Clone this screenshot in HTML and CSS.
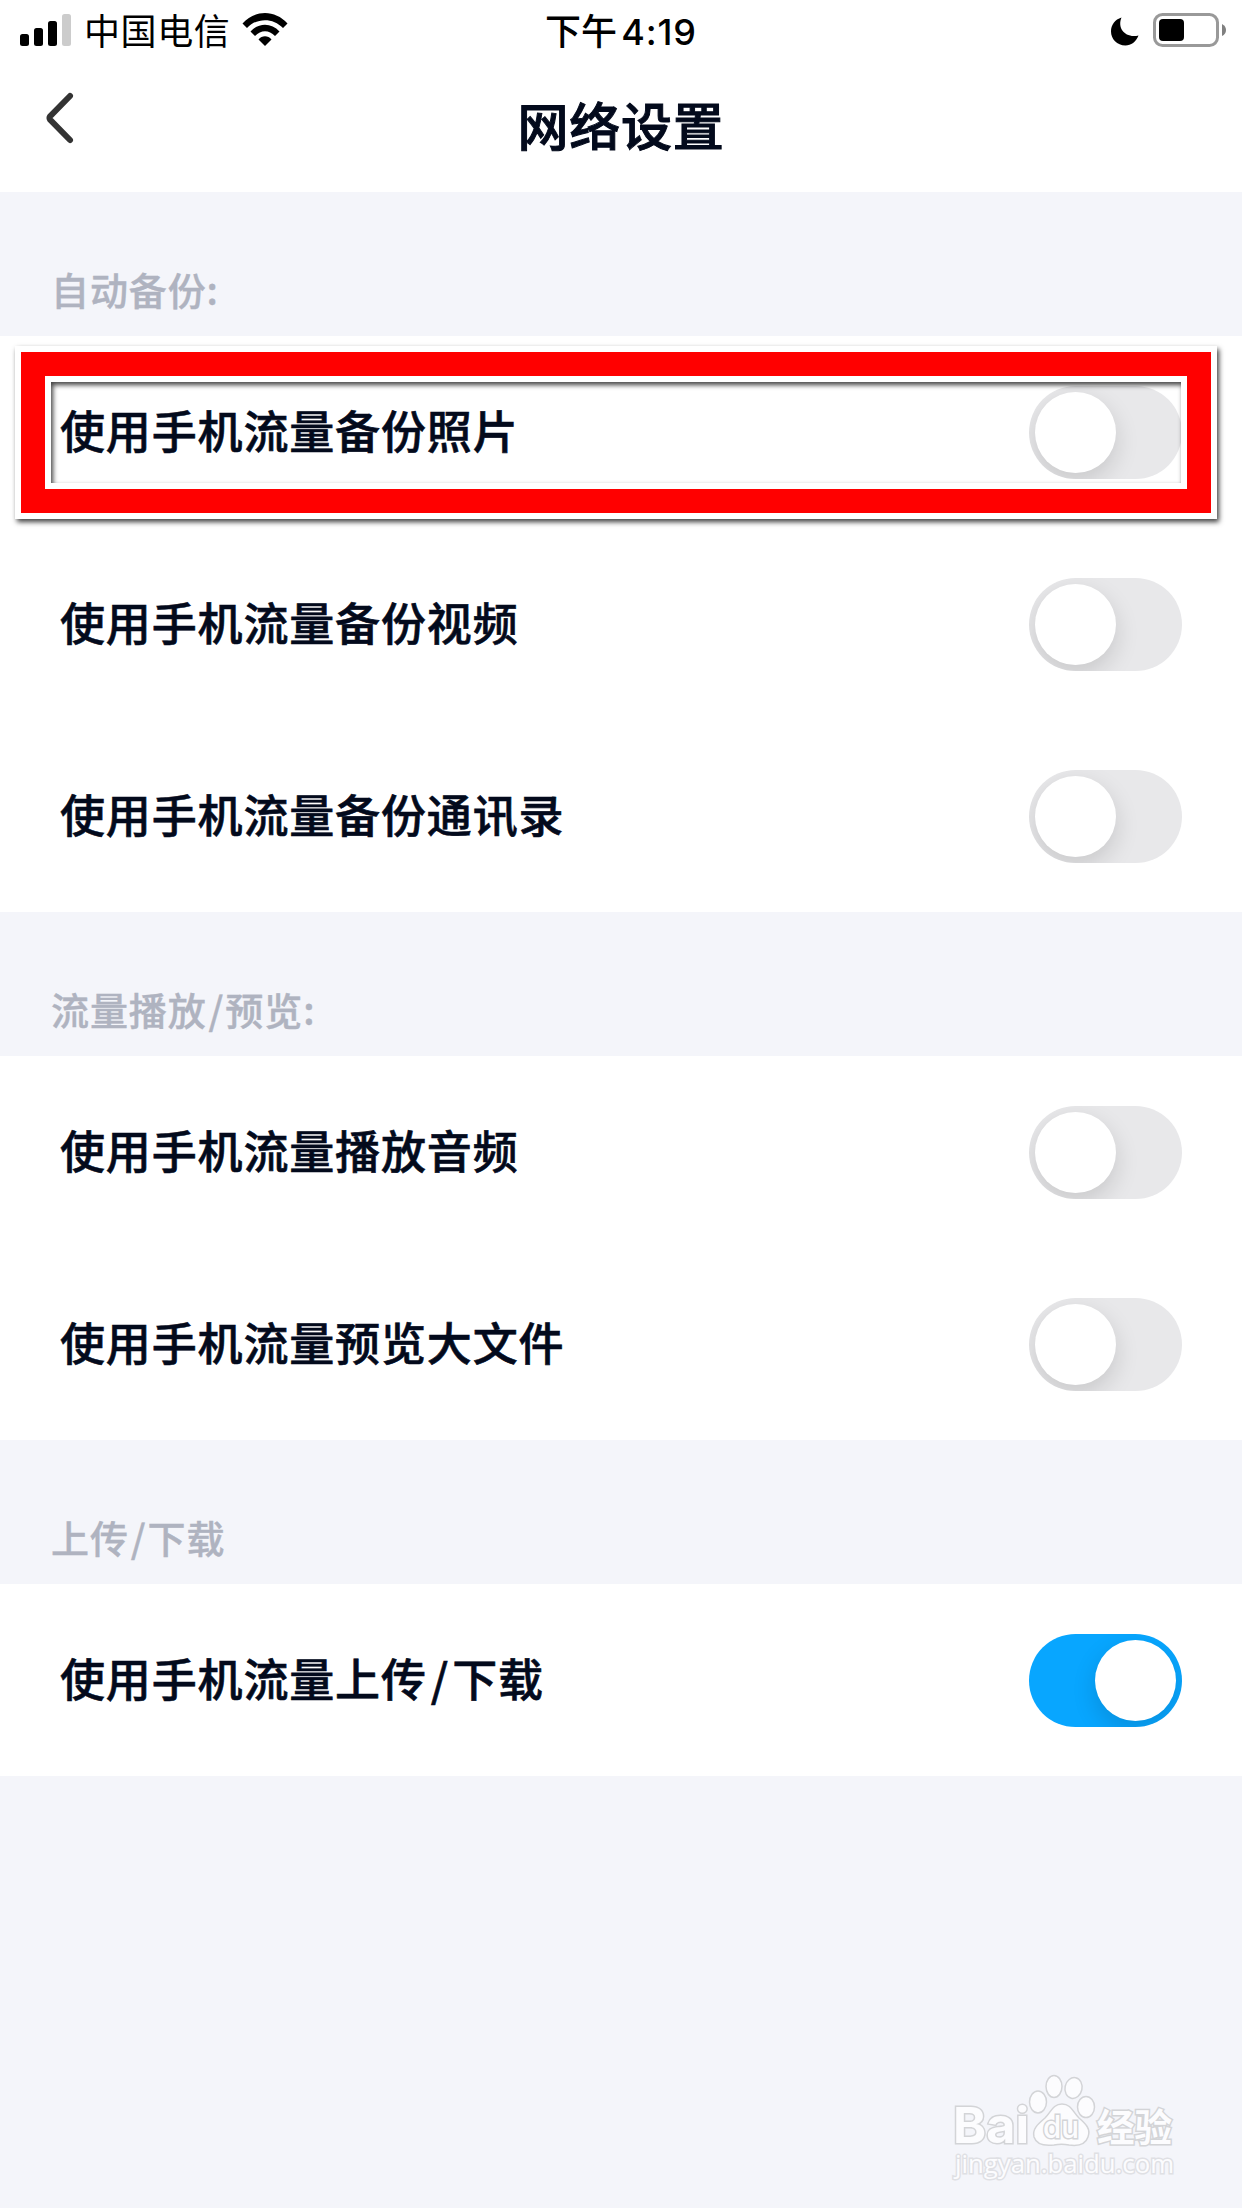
FILE: index.html
```html
<!DOCTYPE html>
<html lang="zh-CN">
  <head>
    <meta charset="UTF-8" />
    <meta name="viewport" content="width=device-width, initial-scale=1.0" />
    <title>网络设置</title>
    <link rel="stylesheet" href="styles.css">
  </head>
  <body>
    <div class="status-bar">
      <div class="status-left">
        <svg class="signal" width="52" height="32" viewBox="0 0 52 32">
          <rect x="0" y="20" width="9" height="12" rx="2.5" />
          <rect x="14" y="14" width="9" height="18" rx="2.5" />
          <rect x="28" y="7" width="9" height="25" rx="2.5" />
          <rect x="42" y="0" width="9" height="32" rx="2.5" fill="#ccc" />
        </svg>
        <span class="carrier">中国电信</span>
        <svg class="wifi" width="46" height="34" viewBox="0 0 46 34">
          <path d="M0.5 10.5C13-3.5 33-3.5 45.5 10.5L41 15C31 4.500 15 4.500 5 15Z" />
          <path d="M8.500 18.500C16.500 9.500 29.500 9.500 37.500 18.500L33 23C27 16.500 19 16.500 13 23Z" />
          <path d="M16.500 26.500C20 22.300 26 22.300 29.500 26.500L23 33Z" />
        </svg>
      </div>
      <div class="time">下午 <span>4:19</span></div>
      <div class="status-right">
        <svg class="moon" width="28" height="29" viewBox="0 0 28 29">
          <path d="M10.500 0.500C6 11 14 21.500 27.500 18.500C25 25 20 28.500 14.500 28.500C6 28.500 0 22 0 14.500C0 8 4 2.500 10.500 0.500Z" />
        </svg>
        <svg class="battery" width="74" height="35" viewBox="0 0 74 35">
          <rect x="1.500" y="1.500" width="63" height="31" rx="8" fill="none" stroke="#999" stroke-width="3" />
          <rect x="6" y="6" width="25" height="22" rx="4" />
          <path d="M69 11Q73 13 73 17T69 23Z" fill="#808080" />
        </svg>
      </div>
    </div>

    <div class="header">
      <svg class="back" width="30" height="54" viewBox="0 0 30 54">
        <path d="M25 5L5 25.500Q4 27 5 28.500L25 49" />
      </svg>
      <h1>网络设置</h1>
    </div>

    <div class="section-title">自动备份:</div>
    <div class="section">
      <div class="row">
        <p>使用手机流量备份照片</p>
        <div class="switch"></div>
        <div class="highlight"></div>
      </div>
      <div class="row">
        <p>使用手机流量备份视频</p>
        <div class="switch"></div>
      </div>
      <div class="row">
        <p>使用手机流量备份通讯录</p>
        <div class="switch"></div>
      </div>
    </div>

    <div class="section-title">流量播放<span class="slash">/</span>预览:</div>
    <div class="section">
      <div class="row">
        <p>使用手机流量播放音频</p>
        <div class="switch"></div>
      </div>
      <div class="row">
        <p>使用手机流量预览大文件</p>
        <div class="switch"></div>
      </div>
    </div>

    <div class="section-title">上传<span class="slash">/</span>下载</div>
    <div class="section">
      <div class="row">
        <p>使用手机流量上传<span class="slash">/</span>下载</p>
        <div class="switch on"></div>
      </div>
    </div>

    <svg class="watermark" width="240" height="120" viewBox="0 0 240 120">
      <g class="mark">
        <text class="logo" x="3" y="73" font-size="50" textLength="76" lengthAdjust="spacingAndGlyphs">Bai</text>
        <ellipse cx="88" cy="32" rx="8.500" ry="11" />
        <ellipse cx="104" cy="16.500" rx="8" ry="11" />
        <ellipse cx="123.500" cy="18" rx="8.500" ry="10.500" transform="rotate(12 123.500 18)" />
        <ellipse cx="136" cy="37" rx="8.500" ry="10.500" />
        <path d="M112 34C121 34 123 42 129 48C136 54 141 59 138 67C135 76 126 76 119 75C114 74 109 74 104 75C96 76 87 76 84 67C82 59 88 54 95 48C101 42 103 34 112 34Z" />
        <text class="du" x="93" y="68" font-size="31" textLength="36" lengthAdjust="spacingAndGlyphs">du</text>
        <text class="jingyan" x="147" y="71" font-size="38" textLength="75" lengthAdjust="spacingAndGlyphs">经验</text>
        <text class="url" x="5" y="103" font-size="26" textLength="219" lengthAdjust="spacingAndGlyphs">jingyan.baidu.com</text>
      </g>
    </svg>
  </body>
</html>
```
FILE: styles.css
```css
*,
*::before,
*::after {
  box-sizing: border-box;
}

body {
  position: relative;
  margin: 0;
  height: 2208px;
  overflow: hidden;
  background-color: #f4f5fa;
  color: #030a1c;
  font-family: "Noto Sans CJK SC", sans-serif;
}

svg {
  display: block;
}

/* status bar */
.status-bar {
  display: grid;
  grid-template-columns: 1fr auto 1fr;
  height: 60px;
  background-color: #fff;
  color: #000;
  font-size: 36px;
  line-height: 58px;
}

.status-left,
.status-right {
  display: flex;
  align-items: flex-start;
}

.status-left {
  padding-left: 20px;
}

.signal {
  margin-top: 14px;
}

.carrier {
  margin-left: 12px;
  letter-spacing: 0.6px;
}

.wifi {
  margin: 13px 0 0 12px;
}

.time {
  font-weight: 500;
  white-space: nowrap;
}

.time span {
  margin-left: -4px;
  font-family: Inter, sans-serif;
  letter-spacing: 0.9px;
}

.status-right {
  justify-content: flex-end;
  padding-right: 15px;
}

.moon {
  margin: 17px 14px 0 0;
}

.battery {
  margin-top: 13px;
}

/* title */
.header {
  display: grid;
  grid-template-columns: 1fr auto 1fr;
  height: 132px;
  background-color: #fff;
}

.back {
  margin: 31px 0 0 45px;
  fill: none;
  stroke: #333;
  stroke-width: 6;
  stroke-linecap: round;
}

h1 {
  margin: 26px 0 0;
  font-size: 51px;
  font-weight: 500;
  line-height: 76px;
  letter-spacing: 0.7px;
  -webkit-text-stroke: 1px #030a1c;
}

/* settings */
.section-title {
  height: 144px;
  padding: 67px 0 0 51px;
  color: #afb3c0;
  font-size: 38px;
  font-weight: 500;
  line-height: 60px;
  letter-spacing: 0.9px;
  -webkit-text-stroke: 0.4px #afb3c0;
}

.section {
  background-color: #fff;
}

.row {
  position: relative;
  display: flex;
  justify-content: space-between;
  align-items: center;
  height: 192px;
  padding: 0 60px;
  font-size: 45px;
  font-weight: 500;
  letter-spacing: 0.85px;
  -webkit-text-stroke: 0.6px #030a1c;
}

.row p {
  margin: 0 0 6px;
}

.section-title .slash {
  padding: 0 1px 0 2px;
}

.row .slash {
  padding: 0 3px 0 4px;
}

.switch {
  width: 153px;
  height: 93px;
  padding: 6px;
  border-radius: 47px;
  background-color: #e8e8ea;
  overflow: hidden;
}

.switch::before {
  content: "";
  display: block;
  width: 81px;
  height: 81px;
  border-radius: 50%;
  background-color: #fff;
  box-shadow: 0 9px 24px rgba(0, 0, 0, 0.14);
}

.switch.on {
  background-color: #08a6ff;
}

.switch.on::before {
  margin-left: 60px;
}

/* red frame over the first row */
.highlight {
  position: absolute;
  top: 10px;
  left: 15px;
  width: 1202px;
  height: 173px;
  border: 6px solid #fff;
  box-shadow: 2px 3px 5px rgba(0, 0, 0, 0.75);
}

.highlight::before {
  content: "";
  display: block;
  height: 100%;
  border: 24px solid #f00;
}

.highlight::after {
  content: "";
  position: absolute;
  inset: 24px;
  border: 6px solid #fff;
  box-shadow: inset 2px 3px 5px rgba(0, 0, 0, 0.75);
}

/* watermark */
.watermark {
  position: absolute;
  left: 950px;
  top: 2070px;
}

.mark {
  fill: #fcfcfe;
  stroke: #d3d4d7;
  stroke-width: 1.5;
}

.mark text {
  paint-order: stroke;
  stroke-width: 3;
}

.logo {
  font-family: Inter, sans-serif;
  font-weight: 700;
}

.du {
  font-family: Inter, sans-serif;
  font-weight: 500;
}

.jingyan {
  font-weight: 700;
}

.mark .url {
  font-family: "Open Sans", sans-serif;
  stroke: #dfe0e4;
}
```
